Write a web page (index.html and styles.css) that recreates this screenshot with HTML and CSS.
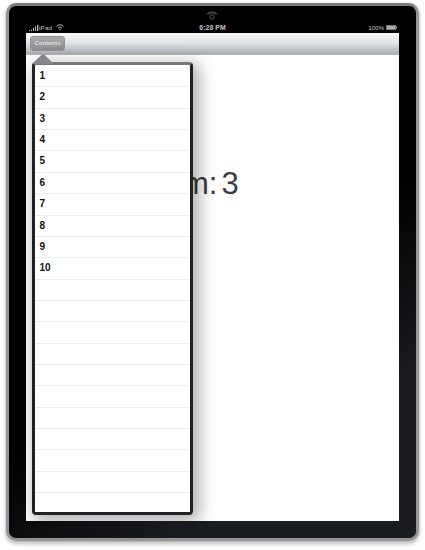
FILE: index.html
```html
<!DOCTYPE html>
<html lang="en">
<head>
<meta charset="utf-8">
<title>Contents</title>
<link rel="stylesheet" href="styles.css">
</head>
<body>
<div class="device">
  <svg class="camera" viewBox="0 0 14 12" width="14" height="12"><path d="M1 4Q7-1.5 13 4L10 4.5Q7 2 4 4.5Z" fill="#444"/><circle cx="7" cy="7" r="2.2" fill="none" stroke="#555" stroke-width="1"/></svg>
  <header class="status">
    <div class="carrier">
      <svg width="10" height="6" viewBox="0 0 10 6"><path d="M0 5h1v1H0zM2 4.5h1V6H2zM4 3h1v3H4zM6 1.5h1V6H6zM8 0h1.3v6H8z" fill="#bbb"/></svg>
      <span>iPad</span>
      <svg class="wifi" width="8" height="7" viewBox="0 0 8 7"><path d="M.5 2.4Q4-.8 7.5 2.4M2 4Q4 2.2 6 4" fill="none" stroke="#bbb"/><path d="M3 5L4 6.5 5 5Z" fill="#bbb"/></svg>
    </div>
    <div class="time">6:28 PM</div>
    <div class="battery">
      <span>100%</span>
      <svg width="11" height="5" viewBox="0 0 11 5"><rect x=".5" y=".5" width="9" height="4" fill="#aaa" stroke="#777"/><path d="M10 1.5h1v2h-1z" fill="#aaa"/></svg>
    </div>
  </header>
  <main class="screen">
    <div class="toolbar"><button class="contents">Contents</button></div>
    <div class="detail">m:<span class="number">3</span></div>
    <div class="popover">
      <svg class="arrow" width="22" height="10" viewBox="0 0 22 10"><path d="M0 10L9.5 1Q11 0 12.5 1L22 10Z" fill="#85858a"/></svg>
      <ul class="list">
        <li>1</li><li>2</li><li>3</li><li>4</li><li>5</li><li>6</li><li>7</li><li>8</li><li>9</li><li>10</li>
        <li></li><li></li><li></li><li></li><li></li><li></li><li></li><li></li><li></li><li></li><li></li>
      </ul>
    </div>
  </main>
</div>
</body>
</html>
```
FILE: styles.css
```css
* { box-sizing: border-box; }
body {
  margin: 0;
  padding: 3px 6px;
  height: 550px;
  overflow: hidden;
  background: #fff;
  font-family: "Liberation Sans", Arial, sans-serif;
}
.device {
  position: relative;
  width: 413px;
  height: 538px;
  padding: 16px 16px 0 17px;
  border: 3px solid #949496;
  border-top-color: #7c7c7e;
  border-radius: 10px;
  background: linear-gradient(145deg, #000 0 55%, #1b1c21 80%);
  box-shadow: 0 3px 4px rgba(0,0,0,.25), 0 0 3px rgba(0,0,0,.15);
}
.camera { position: absolute; left: 196px; top: 4px; }
.status {
  display: grid;
  grid-template-columns: 1fr auto 1fr;
  align-items: center;
  height: 11px;
  padding: 0 3px 0 3px;
  color: #c4c4c4;
  font-size: 6.2px;
  line-height: 11px;
}
.carrier, .battery { display: flex; align-items: center; }
.carrier span { margin-left: 0; letter-spacing: .2px; }
.wifi { margin-left: 4px; }
.time { margin-right: 1px; font-size: 6.8px; font-weight: bold; letter-spacing: .1px; }
.battery { justify-content: flex-end; gap: 2px; }
.screen {
  position: relative;
  width: 373px;
  height: 488px;
  overflow: hidden;
  background: #fff;
}
.toolbar {
  height: 22px;
  padding: 3px 4px;
  background: linear-gradient(#fafafb, #e3e4e6 45%, #acadb3 95%, #b6b7bc);
}
.contents {
  display: block;
  width: 35px;
  height: 15px;
  padding: 0;
  border: 1px solid #949498;
  border-radius: 3px;
  background: linear-gradient(#ababae, #8c8c90);
  color: #dedede;
  font: bold 6px/11px "Liberation Sans", Arial, sans-serif;
}
.detail {
  padding: 110px 0 0 157px;
  color: #3d3d40;
  font-size: 31px;
  line-height: 38px;
}
.number { margin-left: 4px; }
.popover {
  position: absolute;
  left: 6px;
  top: 29px;
  width: 161px;
  height: 453px;
  padding: 1px 0 0;
  border: 3px solid #202127;
  border-top-color: #77777c;
  border-radius: 4px;
  background: #fff;
  box-shadow: 4px 4px 16px 3px rgba(0,0,0,.3);
}
.arrow { position: absolute; left: -3px; top: -11px; }
.list {
  height: 446px;
  margin: 0;
  padding: 0;
  overflow: hidden;
  list-style: none;
}
.list li {
  height: 21.36px;
  padding-left: 4.5px;
  border-bottom: 1px solid #ececec;
  color: #111;
  font-size: 10px;
  font-weight: bold;
  line-height: 20px;
}
.list li:last-child { border-bottom: 0; }
```
